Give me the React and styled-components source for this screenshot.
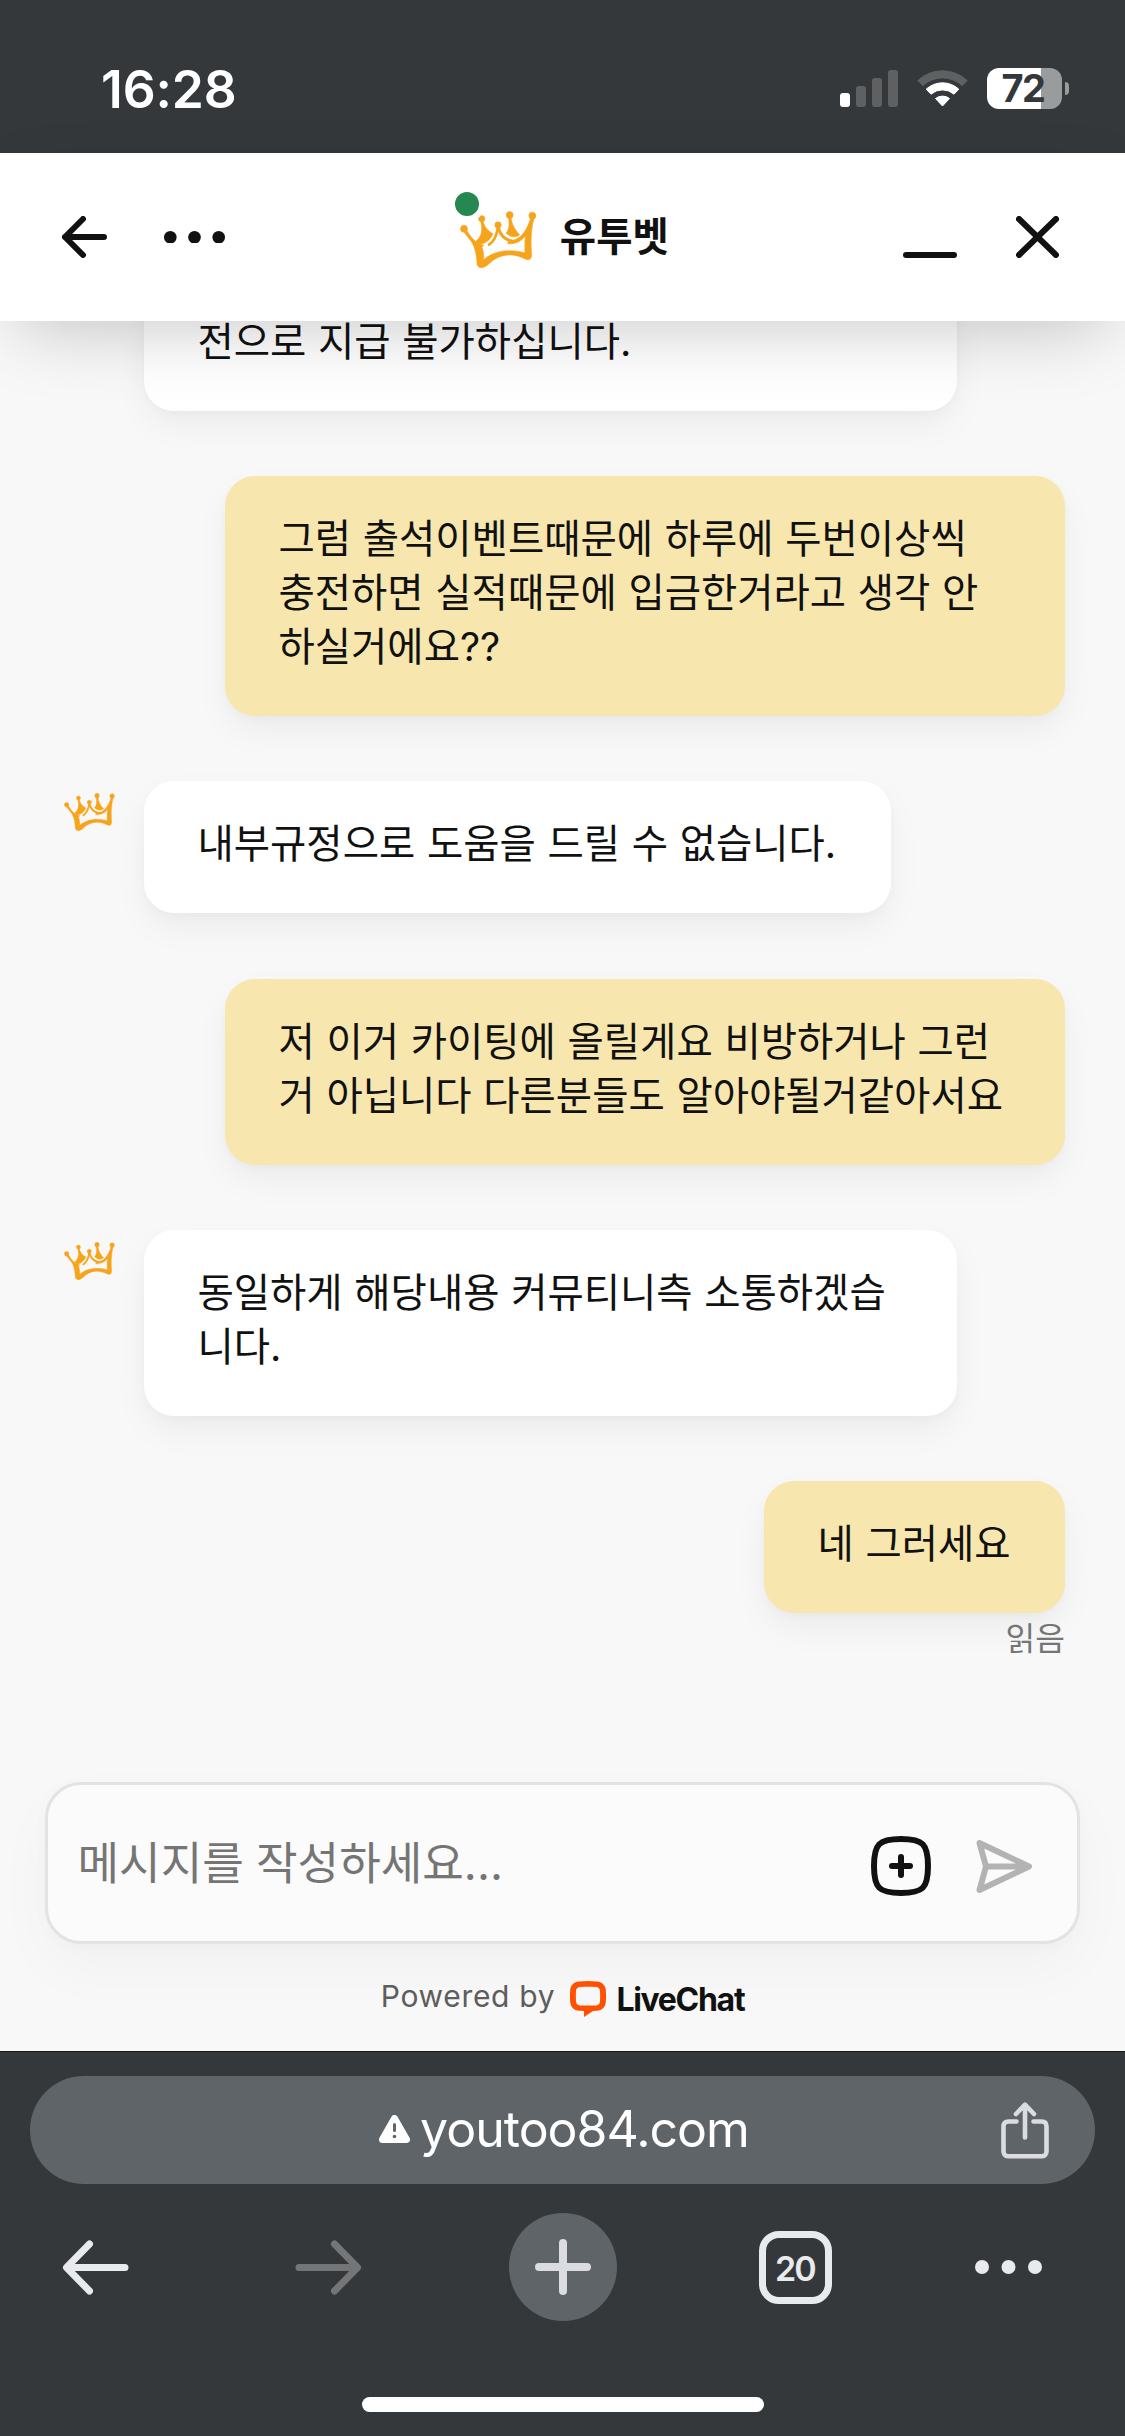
import React from "react";
import styled, { createGlobalStyle } from "styled-components";

const GlobalStyle = createGlobalStyle`
  * {
    box-sizing: border-box;
  }
  body {
    margin: 0;
    background-color: #f8f8f8;
    font-family: Inter, "Noto Sans CJK KR", sans-serif;
    color: #111111;
  }
  svg {
    display: block;
    flex-shrink: 0;
  }
`;

const Screen = styled.div`
  width: 1125px;
  height: 2436px;
  display: flex;
  flex-direction: column;
  overflow: hidden;
  background-color: #f8f8f8;
`;

const StatusBar = styled.div`
  height: 153px;
  flex-shrink: 0;
  padding: 24px 56px 0 101px;
  display: flex;
  justify-content: space-between;
  align-items: center;
  background-color: #34383a;
  color: white;
`;

const Clock = styled.span`
  font-size: 51.5px;
  font-weight: 600;
  letter-spacing: -0.1px;
`;

const StatusIcons = styled.div`
  display: flex;
  align-items: center;
  gap: 19px;
`;

const Battery = styled.div`
  width: 75px;
  height: 41px;
  border-radius: 12px;
  display: flex;
  justify-content: center;
  align-items: center;
  background: linear-gradient(to right, white 72%, #9a9b9d 72%);
  color: #34383a;
  font-size: 38px;
  font-weight: 700;
  letter-spacing: -1.6px;
  line-height: 41px;
  padding-right: 3px;
`;

const BatteryBox = styled.div`
  display: flex;
  align-items: center;
  gap: 3px;
`;

const BatteryTip = styled.div`
  width: 4px;
  height: 13px;
  border-radius: 0 4px 4px 0;
  background-color: #9a9b9d;
`;

const Header = styled.header`
  height: 168px;
  flex-shrink: 0;
  padding: 0 66px 0 61px;
  display: grid;
  grid-template-columns: 1fr auto 1fr;
  align-items: center;
  background-color: white;
  box-shadow: 0 24px 72px -18px rgba(0, 0, 0, 0.22);
  z-index: 2;
`;

const HeaderSide = styled.div`
  display: flex;
  align-items: center;
  justify-content: ${(props) => props.align};
  gap: ${(props) => props.gap};
`;

const Brand = styled.div`
  display: flex;
  align-items: center;
  gap: 23px;
  padding-left: 9px;
`;

const BrandLogo = styled.div`
  position: relative;
  margin-top: 5px;
`;

const OnlineDot = styled.span`
  position: absolute;
  left: -11px;
  top: -25px;
  width: 36px;
  height: 36px;
  border: 6px solid white;
  border-radius: 50%;
  background-color: #268750;
`;

const BrandName = styled.h1`
  margin: 0;
  font-size: 39.5px;
  font-weight: 700;
  line-height: 54px;
`;

const Messages = styled.main`
  flex: 1;
  min-height: 0;
  padding: 0 60px 0 63px;
  display: flex;
  flex-direction: column;
  gap: 65.2px;
`;

const MessageRow = styled.div`
  display: flex;
  flex-direction: column;
  align-items: flex-end;
`;

const AgentRow = styled.div`
  display: flex;
  align-items: flex-start;
`;

const AvatarSlot = styled.div`
  width: 81px;
  flex-shrink: 0;
  padding: 12px 0 0 0.5px;
`;

const Bubble = styled.div`
  width: ${(props) => props.w};
  padding: 36px 0 42px 53.5px;
  margin-top: ${(props) => (props.clipped ? "-42px" : "0")};
  border-radius: 30px;
  background-color: ${(props) => (props.mine ? "#f7e7af" : "white")};
  box-shadow:
    0 3px 9px rgba(0, 0, 0, 0.025),
    0 15px 36px -3px rgba(0, 0, 0, 0.06);
  font-size: 39.45px;
  line-height: 54px;
  word-spacing: 0.6px;
  white-space: pre;
`;

const ReadMark = styled.span`
  height: 45px;
  margin-top: 3px;
  font-size: 32.3px;
  line-height: 45px;
  color: #757575;
`;

const Composer = styled.div`
  height: 162px;
  flex-shrink: 0;
  margin: 0 45px;
  padding: 0 44px 0 29.5px;
  display: flex;
  align-items: center;
  justify-content: space-between;
  border: 3px solid #e3e3e3;
  border-radius: 36px;
  background-color: #fbfbfb;
  box-shadow:
    0 3px 18px rgba(0, 0, 0, 0.02),
    0 24px 60px rgba(0, 0, 0, 0.03);
`;

const Placeholder = styled.span`
  margin-top: 2px;
  font-size: 45.2px;
  line-height: 60px;
  word-spacing: -0.5px;
  color: #757575;
`;

const ComposerActions = styled.div`
  display: flex;
  align-items: center;
  gap: 44px;
  margin-top: 6px;
`;

const PoweredBy = styled.div`
  height: 107px;
  flex-shrink: 0;
  padding-top: 3px;
  display: flex;
  justify-content: center;
  align-items: center;
`;

const PoweredText = styled.span`
  font-size: 30px;
  letter-spacing: 0.7px;
  color: #5d5d5d;
  margin: -6px 15px 0 0;
`;

const LiveChatText = styled.span`
  margin-left: 10px;
  font-size: 32px;
  font-weight: 700;
  letter-spacing: -1.3px;
`;

const BrowserBar = styled.footer`
  height: 385px;
  flex-shrink: 0;
  padding: 24px 30px 24px;
  display: flex;
  flex-direction: column;
  align-items: center;
  border-top: 1px solid #17191a;
  background-color: #34383a;
`;

const AddressBar = styled.div`
  width: 100%;
  height: 108px;
  padding: 0 46px;
  border-radius: 54px;
  display: grid;
  grid-template-columns: 1fr auto 1fr;
  align-items: center;
  background-color: #5f6468;
  color: white;
`;

const Url = styled.div`
  grid-column: 2;
  display: flex;
  align-items: center;
  gap: 10px;
  margin-top: -3px;
  padding-left: 3px;
  font-size: 50px;
  line-height: 60px;
  letter-spacing: -1px;
`;

const ShareButton = styled.div`
  display: flex;
  justify-content: flex-end;
`;

const Toolbar = styled.nav`
  width: 100%;
  height: 108px;
  margin-top: 29px;
  padding-left: 11.5px;
  display: grid;
  grid-template-columns: repeat(4, 108px) 67px;
  column-gap: 125.3px;
  justify-items: center;
  align-items: center;
`;

const NewTab = styled.div`
  width: 108px;
  height: 108px;
  margin-left: 1.5px;
  border-radius: 50%;
  display: flex;
  justify-content: center;
  align-items: center;
  background-color: #5f6468;
`;

const TabCount = styled.div`
  width: 73px;
  height: 73px;
  border: 7px solid #e8eaed;
  border-radius: 20px;
  display: flex;
  justify-content: center;
  align-items: center;
  color: #e8eaed;
  font-size: 34px;
  font-weight: 600;
  letter-spacing: -2px;
  padding: 2px 1px 0 0;
`;

const HomeIndicator = styled.div`
  width: 402px;
  height: 15px;
  margin-top: auto;
  border-radius: 8px;
  background-color: white;
`;

const Crown = ({ width }) => (
  <svg
    width={width}
    viewBox="91 121 230 172"
    fill="#f6a41c"
    stroke="#f6a41c"
    strokeWidth="1.5"
  >
    <circle cx="103" cy="174" r="10.5" />
    <circle cx="156" cy="144" r="9.5" />
    <circle cx="205" cy="163" r="9.5" />
    <circle cx="240" cy="133" r="10.5" />
    <circle cx="308" cy="135" r="10.5" />
    {/* base of the crown */}
    <path
      fillRule="evenodd"
      d="M100 181 L110 177 C121 196 134 212 151 220 C156 222 160 223 163 224 C159 226 158 227 157 229 C161 240 163 254 162 267 C190 241 236 233 286 246 C285 230 285 214 287 196 C275 212 256 222 234 219 L236 209 C272 212 290 182 304 140 L313 142 C303 180 303 220 306 252 C306 266 297 270 286 265 C246 244 206 250 174 283 C160 295 144 293 142 280 C141 256 137 232 126 214 Z"
    />
    {/* left and right points */}
    <path d="M153 150 L160 150 C163 166 174 180 190 189 C184 204 172 216 155 220 C146 219 142 216 139 211 C154 200 160 182 153 150 Z" />
    <path d="M236 140 L244 140 C247 162 255 177 270 192 C258 202 242 200 229 187 C238 178 240 160 236 140 Z" />
    {/* middle point */}
    <path
      d="M205 168 C202 192 194 212 178 222"
      fill="none"
      strokeWidth="8"
      strokeLinecap="round"
    />
    <path
      d="M206 170 C211 192 224 207 246 211"
      fill="none"
      strokeWidth="9"
      strokeLinecap="round"
    />
  </svg>
);

const Signal = () => (
  <svg width="58" height="37" viewBox="0 0 58 37" fill="#5f6062">
    <rect x="0" y="23" width="10" height="14" rx="3" fill="white" />
    <rect x="16" y="16" width="10" height="21" rx="3" />
    <rect x="32" y="8" width="10" height="29" rx="3" />
    <rect x="48" y="0" width="10" height="37" rx="3" />
  </svg>
);

const Wifi = () => (
  <svg width="51" height="37" viewBox="0 0 51 37">
    <path
      d="M0.8 10.6 A36 36 0 0 1 50.2 10.6 L45.2 15.6 A29 29 0 0 0 5.8 15.6 Z"
      fill="#5f6062"
      stroke="#5f6062"
      strokeLinejoin="round"
    />
    <path
      d="M9.2 19.2 A24 24 0 0 1 41.8 19.2 L37 24.2 A17.5 17.5 0 0 0 14 24.2 Z"
      fill="white"
      stroke="white"
      strokeLinejoin="round"
    />
    <path
      d="M18.5 28.5 A11.5 11.5 0 0 1 32.5 28.5 L25.5 36 Z"
      fill="white"
      stroke="white"
      strokeLinejoin="round"
    />
  </svg>
);

const Dots = ({ width, r, color }) => (
  <svg width={width} height={r * 2} fill={color}>
    <circle cx={r} cy={r} r={r} />
    <circle cx={width / 2} cy={r} r={r} />
    <circle cx={width - r} cy={r} r={r} />
  </svg>
);

const Line = ({ width, height, color, weight, d }) => (
  <svg
    width={width}
    height={height}
    fill="none"
    stroke={color}
    strokeWidth={weight}
    strokeLinecap="round"
    strokeLinejoin="round"
  >
    <path d={d} />
  </svg>
);

const LiveChatLogo = () => (
  <svg width="36" height="36" viewBox="0 0 36 36">
    <path
      fill="#ff5100"
      fillRule="evenodd"
      d="M9 0.6 C15 -0.2 21 -0.2 27 0.6 C32 1 35.4 4.4 35.8 9 C36.1 13 36.1 17 35.8 21 C35.4 26 32 29.5 27 29.8 L23 30 L14 36 V24.6 H22 L26 24.4 C28.5 24.2 29.9 22.8 30 20.5 C30.2 17 30.2 13 30 10 C29.9 7.6 28.5 6.3 26 6.1 C21 5.7 15 5.7 10 6.1 C7.5 6.3 6.1 7.6 6 10 C5.8 13 5.8 17 6 20.5 C6.1 22.8 7.5 24.2 10 24.4 L14 24.6 V30 L9 29.8 C4 29.5 0.6 26 0.2 21 C-0.1 17 -0.1 13 0.2 9 C0.6 4.4 4 1 9 0.6 Z"
    />
  </svg>
);

const messages = [
  { id: 1, w: "813px", clipped: true, text: "전으로 지급 불가하십니다." },
  {
    id: 2,
    w: "840px",
    mine: true,
    text: "그럼 출석이벤트때문에 하루에 두번이상씩\n충전하면 실적때문에 입금한거라고 생각 안\n하실거에요??",
  },
  {
    id: 3,
    w: "747px",
    avatar: true,
    text: "내부규정으로 도움을 드릴 수 없습니다.",
  },
  {
    id: 4,
    w: "840px",
    mine: true,
    text: "저 이거 카이팅에 올릴게요 비방하거나 그런\n거 아닙니다 다른분들도 알아야될거같아서요",
  },
  {
    id: 5,
    w: "813px",
    avatar: true,
    text: "동일하게 해당내용 커뮤티니측 소통하겠습\n니다.",
  },
  { id: 6, w: "301px", mine: true, read: true, text: "네 그러세요" },
];

const Message = ({ message }) => {
  const { text, w, mine, avatar, clipped, read } = message;
  if (mine) {
    return (
      <MessageRow>
        <Bubble mine w={w}>
          {text}
        </Bubble>
        {read && <ReadMark>읽음</ReadMark>}
      </MessageRow>
    );
  }
  return (
    <AgentRow>
      <AvatarSlot>{avatar && <Crown width={51} />}</AvatarSlot>
      <Bubble w={w} clipped={clipped}>
        {text}
      </Bubble>
    </AgentRow>
  );
};

const App = () => {
  return (
    <>
      <GlobalStyle />
      <Screen>
        <StatusBar>
          <Clock>16:28</Clock>
          <StatusIcons>
            <Signal />
            <Wifi />
            <BatteryBox>
              <Battery>72</Battery>
              <BatteryTip />
            </BatteryBox>
          </StatusIcons>
        </StatusBar>

        <Header>
          <HeaderSide align="flex-start" gap="57px">
            <Line
              width={46}
              height={42}
              color="#111111"
              weight={6}
              d="M43 21 H4 M22 3 L4 21 L22 39"
            />
            <Dots width={61} r={6.3} color="#111111" />
          </HeaderSide>
          <Brand>
            <BrandLogo>
              <Crown width={76.7} />
              <OnlineDot />
            </BrandLogo>
            <BrandName>유투벳</BrandName>
          </Brand>
          <HeaderSide align="flex-end" gap="59px">
            <Line
              width={54}
              height={42}
              color="#111111"
              weight={6}
              d="M3 39 H51"
            />
            <Line
              width={43}
              height={42}
              color="#111111"
              weight={6}
              d="M3 3 L40 39 M40 3 L3 39"
            />
          </HeaderSide>
        </Header>

        <Messages>
          {messages.map((message) => (
            <Message key={message.id} message={message} />
          ))}
        </Messages>

        <Composer>
          <Placeholder>메시지를 작성하세요...</Placeholder>
          <ComposerActions>
            <Line
              width={60}
              height={60}
              color="#111111"
              weight={6}
              d="M30 3 C52 3 57 8 57 30 C57 52 52 57 30 57 C8 57 3 52 3 30 C3 8 8 3 30 3 Z M21 30 H39 M30 21 V39"
            />
            <Line
              width={58}
              height={55}
              color="#b3b3b3"
              weight={6}
              d="M4.5 4 L54 27.5 L4.5 51 L11 27.5 Z M11 27.5 H52"
            />
          </ComposerActions>
        </Composer>

        <PoweredBy>
          <PoweredText>Powered by</PoweredText>
          <LiveChatLogo />
          <LiveChatText>LiveChat</LiveChatText>
        </PoweredBy>

        <BrowserBar>
          <AddressBar>
            <Url>
              <svg width="31" height="28" viewBox="0 0 31 28">
                <path
                  d="M15.5 3.5 L27.5 24.5 H3.5 Z"
                  fill="white"
                  stroke="white"
                  strokeWidth="7"
                  strokeLinejoin="round"
                />
                <path
                  d="M15.5 9.5 V15.5"
                  stroke="#5f6468"
                  strokeWidth="3"
                  strokeLinecap="round"
                />
                <circle cx="15.5" cy="21.5" r="1.8" fill="#5f6468" />
              </svg>
              youtoo84.com
            </Url>
            <ShareButton>
              <Line
                width={48}
                height={57}
                color="#dadce2"
                weight={4.6}
                d="M15.5 19.5 H7.5 C4 19.5 2.5 21.5 2.5 24.5 V49.5 C2.5 52.5 4.5 54.3 7.5 54.3 H40.5 C43.5 54.3 45.5 52.5 45.5 49.5 V24.5 C45.5 21.5 44 19.5 40.5 19.5 H32.5 M24 35.5 V3 M15 12 L24 2.7 L33 12"
              />
            </ShareButton>
          </AddressBar>

          <Toolbar>
            <Line
              width={67}
              height={55}
              color="#e8eaed"
              weight={7}
              d="M63 27.5 H5 M27.5 4 L4.5 27.5 L27.5 51"
            />
            <Line
              width={67}
              height={55}
              color="#747577"
              weight={7}
              d="M4 27.5 H62 M39.5 4 L62.5 27.5 L39.5 51"
            />
            <NewTab>
              <Line
                width={56}
                height={56}
                color="#dadce2"
                weight={8}
                d="M28 4 V52 M4 28 H52"
              />
            </NewTab>
            <TabCount>20</TabCount>
            <Dots width={67} r={7} color="#e8eaed" />
          </Toolbar>
          <HomeIndicator />
        </BrowserBar>
      </Screen>
    </>
  );
};

export default App;
